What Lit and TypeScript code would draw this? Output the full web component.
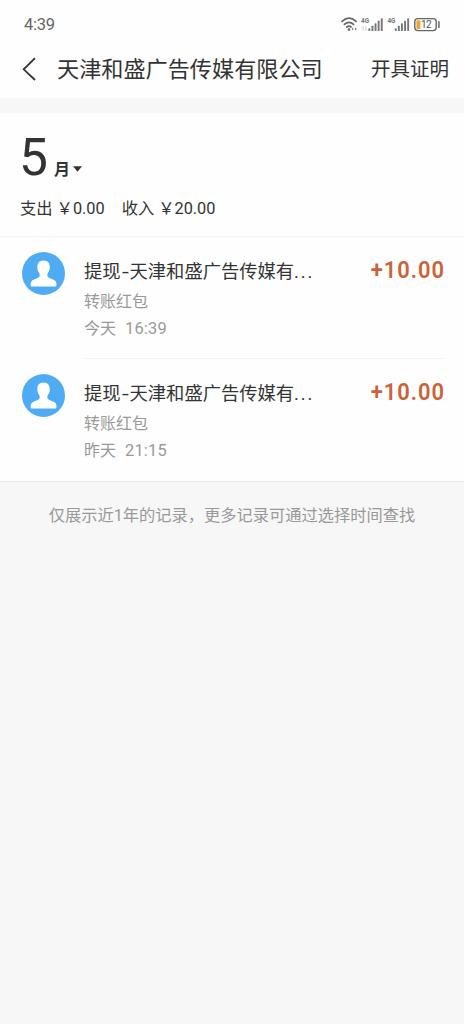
import { LitElement, html, css, svg } from "lit";
import { customElement, property } from "lit/decorators.js";

@customElement("status-bar")
class StatusBar extends LitElement {
  static styles = css`
    :host { display: flex; justify-content: space-between; height: 48px; padding: 0 23px 0 24px; }
    .clock { font-size: 16.5px; line-height: 20px; padding-top: 15px; color: #666; letter-spacing: -0.3px; }
    .icons { display: block; width: 101px; height: 20px; padding-top: 14px; }
    .net { font: 700 7.5px "Roboto", sans-serif; fill: #777; }
    .level { font: 400 10px "Roboto", sans-serif; fill: #555; }
  `;

  private bars(x: number) {
    return [0, 1, 2, 3, 4].map(
      (i) => svg`<rect x=${x + i * 3.1} y=${14.2 - i * 2.5} width="1.9" height=${2.8 + i * 2.5} rx=".6" fill="#777"/>`
    );
  }

  render() {
    return html`
      <div class="clock">4:39</div>
      <svg class="icons" viewBox="0 0 101 20">
        <g fill="none" stroke="#666" stroke-width="1.7" stroke-linecap="round">
          <path d="M2 7.4 Q9 1 16 7.4"/>
          <path d="M4.4 10.4 Q9 6.2 13.6 10.4"/>
          <path d="M6.8 13 Q9 11.2 11 13"/>
        </g>
        <circle cx="9" cy="15.6" r="1.3" fill="#666"/>
        <path d="M11.6 15l1.6-1.6v3.2zM16.8 15l-1.6-1.6v3.2z" fill="#666"/>
        <text class="net" x="21" y="8.8" textLength="8" lengthAdjust="spacingAndGlyphs">4G</text>
        <path d="M23.2 16.5v-4.2l-1.2 1.2M25.8 12.2v4.2l1.2-1.2" fill="none" stroke="#ccc" stroke-width=".9"/>
        ${this.bars(28.4)}
        <text class="net" x="47.4" y="8.8" textLength="8" lengthAdjust="spacingAndGlyphs">4G</text>
        ${this.bars(54.8)}
        <rect x="74.8" y="4.6" width="21.4" height="12" rx="3" fill="none" stroke="#666" stroke-width="1.4"/>
        <path d="M98.9 7.8v5.6" stroke="#666" stroke-width="1.5" stroke-linecap="round"/>
        <rect x="76.4" y="6.2" width="4" height="8.8" rx="1" fill="#eda33c"/>
        <text class="level" x="81" y="14.2" textLength="10.6">12</text>
      </svg>
    `;
  }
}

@customElement("bill-row")
class BillRow extends LitElement {
  @property() label = "";
  @property() kind = "";
  @property() day = "";
  @property() time = "";
  @property() amount = "";

  static styles = css`
    :host { display: flex; height: 122px; padding: 0 20px 0 22px; box-sizing: border-box; }
    .avatar { flex: none; width: 43px; height: 43px; margin-top: 15px; }
    .body { flex: 1; display: flex; justify-content: space-between; margin-left: 19px; height: 122px; box-sizing: border-box; border-bottom: 1px solid #f4f4f4; }
    :host([last]) .body { border-bottom-color: transparent; }
    .label { display: flex; font-size: 18.3px; line-height: 28px; margin-top: 21px; color: #333; }
    .dash { width: 9px; text-align: center; transform: scaleX(1.35); }
    .dots { letter-spacing: 1.9px; }
    .kind { font-size: 16px; line-height: 26px; margin-top: 3px; color: #999; }
    .when { display: flex; gap: 9px; font-size: 16px; line-height: 26px; margin-top: 1px; color: #999; }
    .time { font-size: 16.4px; letter-spacing: 0.2px; }
    .amount { font: 600 24.8px/28px "Roboto", sans-serif; letter-spacing: 1.1px; margin: 19px -1px 0 0; color: #cb6238; transform: scaleX(0.885); transform-origin: right center; }
  `;

  render() {
    const [action, payee] = this.label.split("-");
    return html`
      <svg class="avatar" viewBox="0 0 43 43">
        <circle cx="21.5" cy="21.5" r="21.5" fill="#50abf5"/>
        <path fill="#fff" d="M21.5 8.4c-4 0-6.2 2.8-6.2 6.5 0 2.1.6 4 1.5 5.4.9 1.3 1 2.1.9 3.2-.1 1.3-.7 1.9-2.1 2.5l-4 1.7c-2.1.9-2.9 2.3-2.9 4.4v1.4c0 .6.3.9.9.9h23.9c.6 0 .9-.3.9-.9v-1.4c0-2.1-.8-3.5-2.9-4.4l-4-1.7c-1.4-.6-2-1.2-2.1-2.5-.1-1.1 0-1.9.9-3.2.9-1.4 1.5-3.3 1.5-5.4 0-3.7-2.200-6.500-6.300-6.500z"/>
      </svg>
      <div class="body">
        <div>
          <div class="label"><span>${action}</span><span class="dash">-</span><span>${payee}</span><span class="dots">...</span></div>
          <div class="kind">${this.kind}</div>
          <div class="when"><span>${this.day}</span><span class="time">${this.time}</span></div>
        </div>
        <div class="amount">${this.amount}</div>
      </div>
    `;
  }
}

@customElement("app-root")
class AppRoot extends LitElement {
  static styles = css`
    :host { display: block; min-height: 1024px; background: #f7f7f7; color: #333; font-family: "Roboto", "Noto Sans CJK SC", sans-serif; white-space: nowrap; overflow: hidden; }
    .top { height: 98px; background: #fefefe; }
    .nav { display: flex; align-items: center; height: 42px; padding: 0 15px 0 22px; }
    .back { width: 15px; height: 24px; }
    .title { flex: 1; margin-left: 20px; font-size: 22.15px; line-height: 32px; }
    .action { font-size: 19.5px; line-height: 32px; padding-top: 2px; }
    .sheet { margin-top: 15px; height: 368px; background: #fefefe; border-bottom: 1px solid #e8e8e8; }
    .summary { height: 124px; box-sizing: border-box; border-bottom: 1px solid #f4f4f4; }
    .month { display: flex; align-items: baseline; height: 84px; padding-left: 19px; }
    .num { font-size: 51.5px; line-height: 90px; }
    .unit { font-size: 16px; font-weight: 700; margin-left: 6px; }
    .caret { width: 9px; height: 6px; margin-left: 3px; position: relative; top: -3px; }
    .totals { display: flex; gap: 17px; padding-left: 20px; font-size: 16.3px; line-height: 24px; }
    .note { text-align: center; font-size: 16.25px; line-height: 24px; padding-top: 22px; color: #999; }
  `;

  render() {
    return html`
      <div class="top">
        <status-bar></status-bar>
        <div class="nav">
          <svg class="back" viewBox="0 0 15 24"><path d="M13 1.2L1.7 12.3 13 23" fill="none" stroke="#333" stroke-width="1.8"/></svg>
          <div class="title">天津和盛广告传媒有限公司</div>
          <div class="action">开具证明</div>
        </div>
      </div>
      <div class="sheet">
        <div class="summary">
          <div class="month">
            <span class="num">5</span><span class="unit">月</span>
            <svg class="caret" viewBox="0 0 9 6"><path d="M0 .3h9L4.5 5.7z" fill="#333"/></svg>
          </div>
          <div class="totals"><span>支出 ￥0.00</span><span>收入 ￥20.00</span></div>
        </div>
        <bill-row label="提现-天津和盛广告传媒有" kind="转账红包" day="今天" time="16:39" amount="+10.00"></bill-row>
        <bill-row last label="提现-天津和盛广告传媒有" kind="转账红包" day="昨天" time="21:15" amount="+10.00"></bill-row>
      </div>
      <div class="note">仅展示近1年的记录，更多记录可通过选择时间查找</div>
    `;
  }
}
